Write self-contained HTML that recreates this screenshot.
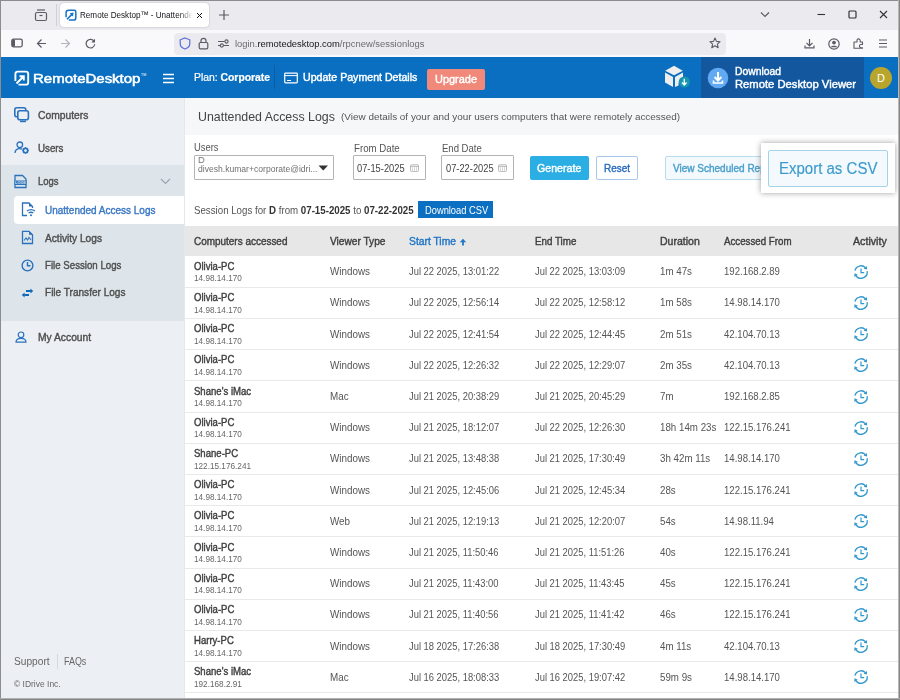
<!DOCTYPE html>
<html><head><meta charset="utf-8"><title>Remote Desktop - Unattended Access Logs</title>
<style>
html,body{margin:0;padding:0}
body{width:900px;height:700px;overflow:hidden;position:relative;background:#fff;font-family:"Liberation Sans",sans-serif}
.a{position:absolute;display:block}
.t{position:absolute;white-space:nowrap;line-height:1}
b{font-weight:bold}
</style></head><body>
<div class="a" style="left:0px;top:0px;width:900px;height:30px;background:#ebebef;"></div>
<div class="a" style="left:0px;top:30px;width:900px;height:27px;background:#f9f9fb;"></div>
<svg class="a" style="left:34px;top:8px;" width="14" height="14" viewBox="0 0 14 14"><rect x="1.5" y="4.5" width="11" height="8" rx="1.5" fill="none" stroke="#5b5b66" stroke-width="1.2"/><line x1="3" y1="2" x2="11" y2="2" stroke="#5b5b66" stroke-width="1.2"/><line x1="5.5" y1="7.5" x2="8.5" y2="7.5" stroke="#5b5b66" stroke-width="1.2"/></svg>
<div class="a" style="left:56px;top:4px;width:1px;height:22px;background:#cfcfd8;"></div>
<div class="a" style="left:60px;top:3px;width:149px;height:24px;background:#fff;border-radius:4px;box-shadow:0 0 2px rgba(0,0,0,.25);"></div>
<svg class="a" style="left:64.5px;top:8.5px;" width="12" height="12" viewBox="0 0 12 12"><path d="M1.1 8.2 V3.6 A2.4 2.4 0 0 1 3.5 1.2 H9.2 A1.6 1.6 0 0 1 10.8 2.8 V8.9 A2.2 2.2 0 0 1 8.6 11.1 H3.8" fill="none" stroke="#1673c9" stroke-width="1.5"/><path d="M2 10.3 L7.2 5.1" stroke="#1673c9" stroke-width="1.6"/><path d="M4.6 4.2 L8.6 3.6 L8 7.6 Z" fill="#1673c9"/></svg>
<div class="a" style="left:80px;top:7px;width:113px;height:16px;overflow:hidden;-webkit-mask-image:linear-gradient(90deg,#000 88%,transparent);mask-image:linear-gradient(90deg,#000 88%,transparent)">
<div class="t" style="left:0.00px;top:3.00px;font-size:9.4px;color:#15141a;transform:scaleX(0.8653);transform-origin:0 0;">Remote Desktop™ - Unattended</div>
</div>
<svg class="a" style="left:195.5px;top:11.5px;" width="7" height="7" viewBox="0 0 7 7"><path d="M1 1 L6 6 M6 1 L1 6" stroke="#15141a" stroke-width="1"/></svg>
<svg class="a" style="left:218px;top:9px;" width="12" height="12" viewBox="0 0 12 12"><path d="M6 1 V11 M1 6 H11" stroke="#5b5b66" stroke-width="1.2"/></svg>
<svg class="a" style="left:760px;top:11px;" width="10" height="8" viewBox="0 0 10 8"><path d="M1 1.5 L5 5.5 L9 1.5" fill="none" stroke="#5b5b66" stroke-width="1.2"/></svg>
<svg class="a" style="left:817px;top:13px;" width="9" height="3" viewBox="0 0 9 3"><line x1="0.5" y1="1.5" x2="8" y2="1.5" stroke="#333" stroke-width="1.1"/></svg>
<svg class="a" style="left:848px;top:10px;" width="9" height="9" viewBox="0 0 9 9"><rect x="1" y="1" width="7" height="7" rx="1" fill="none" stroke="#333" stroke-width="1.2"/></svg>
<svg class="a" style="left:879px;top:10px;" width="9" height="9" viewBox="0 0 9 9"><path d="M1 1 L8 8 M8 1 L1 8" stroke="#333" stroke-width="1.1"/></svg>
<svg class="a" style="left:11px;top:38px;" width="12" height="10" viewBox="0 0 12 10"><rect x="0.8" y="1.2" width="10.4" height="7.6" rx="1.5" fill="none" stroke="#5b5b66" stroke-width="1.3"/><rect x="1" y="1.5" width="3" height="7" fill="#5b5b66"/></svg>
<svg class="a" style="left:36px;top:38px;" width="11" height="11" viewBox="0 0 11 11"><path d="M10 5.5 H1.5 M5.5 1.5 L1.5 5.5 L5.5 9.5" fill="none" stroke="#5b5b66" stroke-width="1.2"/></svg>
<svg class="a" style="left:60px;top:38px;" width="11" height="11" viewBox="0 0 11 11"><path d="M1 5.5 H9.5 M5.5 1.5 L9.5 5.5 L5.5 9.5" fill="none" stroke="#b4b4bb" stroke-width="1.2"/></svg>
<svg class="a" style="left:85px;top:38px;" width="11" height="11" viewBox="0 0 11 11"><path d="M9.2 3.6 A4.3 4.3 0 1 0 9.7 6.2" fill="none" stroke="#5b5b66" stroke-width="1.2"/><path d="M10 0.8 V4.5 H6.3 Z" fill="#5b5b66"/></svg>
<div class="a" style="left:174px;top:32.5px;width:552px;height:22px;background:#ebebef;border-radius:4px;"></div>
<svg class="a" style="left:179px;top:37px;" width="12" height="13" viewBox="0 0 12 13"><path d="M6 1 L10.8 2.8 V6.5 C10.8 9.3 8.6 11.2 6 12 C3.4 11.2 1.2 9.3 1.2 6.5 V2.8 Z" fill="none" stroke="#5b6bdb" stroke-width="1.2"/></svg>
<svg class="a" style="left:198px;top:37px;" width="11" height="13" viewBox="0 0 11 13"><rect x="1.2" y="5.5" width="8.6" height="6.3" rx="1.3" fill="none" stroke="#5b5b66" stroke-width="1.2"/><path d="M3 5.5 V3.8 A2.5 2.5 0 0 1 8 3.8 V5.5" fill="none" stroke="#5b5b66" stroke-width="1.2"/></svg>
<svg class="a" style="left:217px;top:38px;" width="13" height="11" viewBox="0 0 13 11"><path d="M1 3.5 H7.5 M1 7.5 H3.5 M6.5 7.5 H12" stroke="#5b5b66" stroke-width="1.1"/><circle cx="9.5" cy="3.5" r="1.6" fill="none" stroke="#5b5b66" stroke-width="1.1"/><circle cx="4.8" cy="7.5" r="1.6" fill="none" stroke="#5b5b66" stroke-width="1.1"/></svg>
<div class="t" style="left:235.40px;top:40.00px;font-size:9.2px;color:#6a6a72;transform:scaleX(1.0214);transform-origin:0 0;">login.<span style="color:#15141a">remotedesktop.com</span>/rpcnew/sessionlogs</div>
<svg class="a" style="left:709px;top:37px;" width="12" height="12" viewBox="0 0 12 12"><path d="M6 1 L7.5 4.4 L11.1 4.7 L8.4 7.1 L9.2 10.7 L6 8.8 L2.8 10.7 L3.6 7.1 L0.9 4.7 L4.5 4.4 Z" fill="none" stroke="#5b5b66" stroke-width="1.1" stroke-linejoin="round"/></svg>
<svg class="a" style="left:804px;top:38px;" width="11" height="11" viewBox="0 0 11 11"><path d="M5.5 1 V7.5 M2.5 4.8 L5.5 7.8 L8.5 4.8 M1 7.5 V9.8 H10 V7.5" fill="none" stroke="#5b5b66" stroke-width="1.2"/></svg>
<svg class="a" style="left:828px;top:38px;" width="12" height="12" viewBox="0 0 12 12"><circle cx="6" cy="6" r="5.2" fill="none" stroke="#5b5b66" stroke-width="1.2"/><circle cx="6" cy="4.6" r="1.9" fill="#5b5b66"/><path d="M2.8 9.2 C3.5 7.3 8.5 7.3 9.2 9.2" fill="#5b5b66"/></svg>
<svg class="a" style="left:853px;top:38px;" width="12" height="11" viewBox="0 0 12 11"><path d="M1 4 H4 V2.5 A1.6 1.6 0 0 1 7.2 2.5 V4 H9.5 V6.5 H8 A1.6 1.6 0 0 0 8 9.7 H9.5 V10.3 H1 Z" fill="none" stroke="#5b5b66" stroke-width="1.1" stroke-linejoin="round"/></svg>
<svg class="a" style="left:878px;top:38px;" width="10" height="11" viewBox="0 0 10 11"><path d="M1 2 H9 M1 5.5 H9 M1 9 H9" stroke="#5b5b66" stroke-width="1.2"/></svg>
<div class="a" style="left:0px;top:57px;width:900px;height:41px;background:#0a6fc0;"></div>
<div class="a" style="left:701px;top:57px;width:163px;height:41px;background:#13579f;"></div>
<svg class="a" style="left:14px;top:70px;" width="16" height="16" viewBox="0 0 16 16"><path d="M4.5 14.6 H12 A2.2 2.2 0 0 0 14.2 12.4 V3.8 A2.2 2.2 0 0 0 12 1.6 H3.6 A2.2 2.2 0 0 0 1.4 3.8 V11" fill="none" stroke="#fff" stroke-width="1.9"/><path d="M2.5 13.5 L9.5 6.5 M5.5 6.2 H9.8 V10.5" fill="none" stroke="#fff" stroke-width="1.9"/></svg>
<div class="t" style="left:32.50px;top:72.00px;font-size:13.6px;color:#fff;-webkit-text-stroke:0.55px #fff;transform:scaleX(1.1024);transform-origin:0 0;">RemoteDesktop</div>
<div class="t" style="left:141.00px;top:74.00px;font-size:3.5px;color:#fff;">TM</div>
<svg class="a" style="left:162px;top:73px;" width="13" height="11" viewBox="0 0 13 11"><path d="M1 1.5 H12 M1 5.5 H12 M1 9.5 H12" stroke="#fff" stroke-width="1.6"/></svg>
<div class="t" style="left:194.30px;top:72.00px;font-size:10.6px;color:#fff;-webkit-text-stroke:0.2px #fff;transform:scaleX(0.9792);transform-origin:0 0;">Plan: <b>Corporate</b></div>
<div class="a" style="left:274px;top:65px;width:1px;height:24px;background:#0a5ca3;"></div>
<svg class="a" style="left:284px;top:72px;" width="14" height="12" viewBox="0 0 14 12"><rect x="0.7" y="1.2" width="12.6" height="9.6" rx="0.8" fill="none" stroke="#fff" stroke-width="1.2"/><line x1="1" y1="3.6" x2="13" y2="3.6" stroke="#fff" stroke-width="1"/><line x1="3" y1="8.5" x2="7" y2="8.5" stroke="#fff" stroke-width="1"/></svg>
<div class="t" style="left:302.70px;top:73.00px;font-size:10.2px;color:#fff;-webkit-text-stroke:0.4px #fff;transform:scaleX(1.0410);transform-origin:0 0;">Update Payment Details</div>
<div class="a" style="left:427px;top:68.5px;width:58px;height:21px;background:#f08979;border-radius:2px;"></div>
<div class="t" style="left:435.00px;top:74.00px;font-size:10.8px;color:#fff;-webkit-text-stroke:0.4px #fff;transform:scaleX(1.0138);transform-origin:0 0;">Upgrade</div>
<svg class="a" style="left:663px;top:64px;" width="30" height="28" viewBox="0 0 30 28"><path d="M11 1.8 L19.8 6.8 L11 11.2 L2.2 6.8 Z" fill="#eeeeee"/><path d="M2 8.6 L10 12.9 V23 L2 18.6 Z" fill="#eeeeee"/><path d="M12 12.9 L20 8.6 V15 A6 6 0 0 0 15.5 21.5 L12 23 Z" fill="#eeeeee"/><circle cx="21.3" cy="18" r="5.6" fill="#1597b0"/><path d="M21.3 14.8 V20.6 M19 18.5 L21.3 20.9 L23.6 18.5" fill="none" stroke="#fff" stroke-width="1.4"/></svg>
<svg class="a" style="left:707px;top:67px;" width="22" height="22" viewBox="0 0 22 22"><circle cx="11" cy="11" r="10.3" fill="#62a9f3"/><path d="M11 5 V13.2 M7.6 10 L11 13.5 L14.4 10" fill="none" stroke="#fff" stroke-width="2"/><path d="M6.5 13.5 V16 H15.5 V13.5" fill="none" stroke="#fff" stroke-width="1.6"/></svg>
<div class="t" style="left:735.00px;top:66.00px;font-size:10.5px;color:#fff;-webkit-text-stroke:0.4px #fff;transform:scaleX(0.9851);transform-origin:0 0;">Download</div>
<div class="t" style="left:735.00px;top:79.00px;font-size:10.5px;color:#fff;-webkit-text-stroke:0.4px #fff;transform:scaleX(1.0705);transform-origin:0 0;">Remote Desktop Viewer</div>
<div class="a" style="left:870px;top:67px;width:22px;height:22px;border-radius:50%;background:#b9a52c;"></div>
<div class="t" style="left:877.00px;top:73.00px;font-size:11px;color:#fff;">D</div>
<div class="a" style="left:0px;top:98px;width:184px;height:602px;background:#ecf0f4;"></div>
<div class="a" style="left:184px;top:98px;width:1px;height:602px;background:#e2e8ed;"></div>
<div class="a" style="left:0px;top:165px;width:184px;height:156px;background:#dde5ea;"></div>
<div class="a" style="left:14px;top:196px;width:170px;height:27.5px;background:#fff;border-radius:4px 0 0 4px;"></div>
<svg class="a" style="left:14px;top:107px;" width="16" height="16" viewBox="0 0 16 16"><rect x="0.8" y="0.8" width="11" height="9" rx="2" fill="none" stroke="#2a72bd" stroke-width="1.6"/><rect x="3.8" y="3.8" width="10.6" height="9" rx="2" fill="#ecf0f4" stroke="#2a72bd" stroke-width="1.6"/><rect x="6" y="13.6" width="6" height="1.6" fill="#2a72bd"/></svg>
<div class="t" style="left:37.50px;top:110.00px;font-size:10.6px;color:#4e4e4e;-webkit-text-stroke:0.4px #4e4e4e;transform:scaleX(0.9703);transform-origin:0 0;">Computers</div>
<svg class="a" style="left:14px;top:141px;" width="16" height="13" viewBox="0 0 16 13"><circle cx="5.8" cy="3.8" r="2.8" fill="none" stroke="#2a72bd" stroke-width="1.3"/><path d="M0.9 12 C1.2 8.6 3.5 7.6 5.8 7.6 C6.8 7.6 7.6 7.8 8.3 8.2" fill="none" stroke="#2a72bd" stroke-width="1.3"/><circle cx="11.5" cy="9.6" r="2.2" fill="none" stroke="#2a72bd" stroke-width="1.6"/><path d="M11.5 6.3 V7 M11.5 12.2 V12.9 M8.2 9.6 H8.9 M14.1 9.6 H14.8 M9.2 7.3 L9.7 7.8 M13.3 11.4 L13.8 11.9 M13.8 7.3 L13.3 7.8 M9.7 11.4 L9.2 11.9" stroke="#2a72bd" stroke-width="1.5"/></svg>
<div class="t" style="left:37.50px;top:143.00px;font-size:10.6px;color:#4e4e4e;-webkit-text-stroke:0.4px #4e4e4e;transform:scaleX(0.9212);transform-origin:0 0;">Users</div>
<svg class="a" style="left:14px;top:174px;" width="13" height="15" viewBox="0 0 13 15"><path d="M1 1.5 H8.5 L12 5 V13.5 H1 Z" fill="none" stroke="#2a72bd" stroke-width="1.3"/><rect x="0.5" y="6.5" width="12" height="4.5" fill="#2a72bd"/><text x="6.5" y="10.2" font-size="3.8" fill="#dce4ea" text-anchor="middle" font-family="Liberation Sans" font-weight="bold">LOGS</text></svg>
<div class="t" style="left:37.50px;top:176.00px;font-size:10.6px;color:#4e4e4e;-webkit-text-stroke:0.4px #4e4e4e;transform:scaleX(0.8918);transform-origin:0 0;">Logs</div>
<svg class="a" style="left:160px;top:178px;" width="11" height="7" viewBox="0 0 11 7"><path d="M1 1 L5.5 5.5 L10 1" fill="none" stroke="#9aa4ad" stroke-width="1.1"/></svg>
<svg class="a" style="left:21px;top:202px;" width="15" height="15" viewBox="0 0 15 15"><path d="M6 13.5 H1.5 V1 H8 L11.5 4.5 V6" fill="none" stroke="#2a72bd" stroke-width="1.3"/><path d="M8 1 V4.5 H11.5" fill="#2a72bd"/><path d="M6 9 A7 7 0 0 1 14 9 M7.6 11 A4.5 4.5 0 0 1 12.4 11" fill="none" stroke="#2a72bd" stroke-width="1.3"/><circle cx="10" cy="13.2" r="1" fill="#2a72bd"/></svg>
<div class="t" style="left:45.00px;top:205.00px;font-size:10.6px;color:#3a78c6;-webkit-text-stroke:0.4px #3a78c6;transform:scaleX(0.9423);transform-origin:0 0;">Unattended Access Logs</div>
<svg class="a" style="left:21px;top:230px;" width="13" height="15" viewBox="0 0 13 15"><path d="M1.5 1.3 H8 L11.5 4.8 V13.5 H1.5 Z" fill="none" stroke="#2a72bd" stroke-width="1.3"/><path d="M8 1 V4.8 H11.8" fill="#2a72bd"/><path d="M3 10.5 L5 8 L6.5 10 L8 7.5 L10 10" fill="none" stroke="#2a72bd" stroke-width="1.1"/></svg>
<div class="t" style="left:44.80px;top:233.00px;font-size:10.6px;color:#4e4e4e;-webkit-text-stroke:0.4px #4e4e4e;transform:scaleX(0.9580);transform-origin:0 0;">Activity Logs</div>
<svg class="a" style="left:21px;top:259px;" width="13" height="13" viewBox="0 0 13 13"><circle cx="6.5" cy="6.5" r="5.4" fill="none" stroke="#2a72bd" stroke-width="1.4"/><path d="M6.5 3 V6.8 H9.5" fill="none" stroke="#2a72bd" stroke-width="1.4"/></svg>
<div class="t" style="left:44.80px;top:260.00px;font-size:10.6px;color:#4e4e4e;-webkit-text-stroke:0.4px #4e4e4e;transform:scaleX(0.9143);transform-origin:0 0;">File Session Logs</div>
<svg class="a" style="left:21px;top:287px;" width="13" height="12" viewBox="0 0 13 12"><path d="M5 3.9 H9.8 M3.3 8 H8" stroke="#0f69ba" stroke-width="2"/><path d="M9.4 1.4 L12.2 3.9 L9.4 6.4 Z M3.6 5.5 L0.8 8 L3.6 10.5 Z" fill="#0f69ba"/></svg>
<div class="t" style="left:44.80px;top:287.00px;font-size:10.6px;color:#4e4e4e;-webkit-text-stroke:0.4px #4e4e4e;transform:scaleX(0.9489);transform-origin:0 0;">File Transfer Logs</div>
<svg class="a" style="left:15px;top:331px;" width="12" height="12" viewBox="0 0 12 12"><circle cx="6" cy="3.8" r="2.8" fill="none" stroke="#2a72bd" stroke-width="1.2"/><path d="M1 11.2 C1 8.3 3.2 7.3 6 7.3 C8.8 7.3 11 8.3 11 11.2 Z" fill="none" stroke="#2a72bd" stroke-width="1.2"/></svg>
<div class="t" style="left:37.60px;top:332.00px;font-size:10.6px;color:#4e4e4e;-webkit-text-stroke:0.4px #4e4e4e;transform:scaleX(0.9709);transform-origin:0 0;">My Account</div>
<div class="t" style="left:14.00px;top:657.00px;font-size:10px;color:#666;transform:scaleX(1.0164);transform-origin:0 0;">Support</div>
<div class="a" style="left:57px;top:654px;width:1px;height:15px;background:#d4d9de;"></div>
<div class="t" style="left:64.40px;top:657.00px;font-size:10px;color:#666;transform:scaleX(0.8918);transform-origin:0 0;">FAQs</div>
<div class="t" style="left:14.00px;top:680.00px;font-size:8.6px;color:#666;transform:scaleX(0.9845);transform-origin:0 0;">© IDrive Inc.</div>
<div class="a" style="left:185px;top:98px;width:714px;height:36.5px;background:#f5f7f8;"></div>
<div class="t" style="left:198.00px;top:110.00px;font-size:13.4px;color:#444;transform:scaleX(0.9241);transform-origin:0 0;">Unattended Access Logs</div>
<div class="t" style="left:341.00px;top:112.00px;font-size:9.9px;color:#555;transform:scaleX(1.0052);transform-origin:0 0;">(View details of your and your users computers that were remotely accessed)</div>
<div class="t" style="left:194.20px;top:143.00px;font-size:10.2px;color:#555;transform:scaleX(0.9236);transform-origin:0 0;">Users</div>
<div class="a" style="left:194px;top:155px;width:140px;height:24.7px;background:#fff;box-sizing:border-box;border:1px solid #b3b3b3;border-radius:1px;"></div>
<div class="t" style="left:198.00px;top:156.00px;font-size:9.2px;color:#777;">D</div>
<div class="t" style="left:198.00px;top:165.00px;font-size:9.3px;color:#707070;transform:scaleX(0.9219);transform-origin:0 0;">divesh.kumar+corporate@idri...</div>
<svg class="a" style="left:318px;top:165px;" width="11" height="6" viewBox="0 0 11 6"><path d="M0.5 0.5 H10 L5.25 5.5 Z" fill="#333"/></svg>
<div class="t" style="left:353.60px;top:144.00px;font-size:10.2px;color:#555;transform:scaleX(0.9507);transform-origin:0 0;">From Date</div>
<div class="a" style="left:353px;top:155.4px;width:72.6px;height:25px;background:#fff;box-sizing:border-box;border:1px solid #b3b3b3;border-radius:1px;"></div>
<div class="t" style="left:357.40px;top:163.00px;font-size:10.6px;color:#444;transform:scaleX(0.8778);transform-origin:0 0;">07-15-2025</div>
<svg class="a" style="left:410px;top:164px;" width="9" height="8" viewBox="0 0 9 8"><rect x="0.5" y="0.8" width="8" height="6.6" rx="0.8" fill="none" stroke="#a8a8a8" stroke-width="0.8"/><line x1="0.5" y1="2.4" x2="8.5" y2="2.4" stroke="#a8a8a8" stroke-width="0.8"/><path d="M2 4 h1 M4 4 h1 M6 4 h1 M2 5.8 h1 M4 5.8 h1 M6 5.8 h1" stroke="#a8a8a8" stroke-width="0.8"/></svg>
<div class="t" style="left:441.60px;top:144.00px;font-size:10.2px;color:#555;transform:scaleX(0.9358);transform-origin:0 0;">End Date</div>
<div class="a" style="left:441.4px;top:155.4px;width:72.6px;height:25px;background:#fff;box-sizing:border-box;border:1px solid #b3b3b3;border-radius:1px;"></div>
<div class="t" style="left:445.80px;top:163.00px;font-size:10.6px;color:#444;transform:scaleX(0.8778);transform-origin:0 0;">07-22-2025</div>
<svg class="a" style="left:498.4px;top:164px;" width="9" height="8" viewBox="0 0 9 8"><rect x="0.5" y="0.8" width="8" height="6.6" rx="0.8" fill="none" stroke="#a8a8a8" stroke-width="0.8"/><line x1="0.5" y1="2.4" x2="8.5" y2="2.4" stroke="#a8a8a8" stroke-width="0.8"/><path d="M2 4 h1 M4 4 h1 M6 4 h1 M2 5.8 h1 M4 5.8 h1 M6 5.8 h1" stroke="#a8a8a8" stroke-width="0.8"/></svg>
<div class="a" style="left:529.7px;top:155.5px;width:59.3px;height:24.5px;background:#2aaee4;border-radius:2px;"></div>
<div class="t" style="left:537.30px;top:163.00px;font-size:10.8px;color:#fff;-webkit-text-stroke:0.4px #fff;transform:scaleX(0.9860);transform-origin:0 0;">Generate</div>
<div class="a" style="left:596px;top:155.5px;width:42px;height:24.5px;background:#fff;box-sizing:border-box;border:1px solid #aac6ea;border-radius:2px;"></div>
<div class="t" style="left:604.30px;top:163.00px;font-size:10.8px;color:#2c6cbf;-webkit-text-stroke:0.4px #2c6cbf;transform:scaleX(0.9216);transform-origin:0 0;">Reset</div>
<div class="a" style="left:665px;top:155.5px;width:110px;height:24.5px;background:#f3f9fc;box-sizing:border-box;border:1px solid #b7dcee;border-radius:2px;"></div>
<div class="t" style="left:673.00px;top:163.00px;font-size:10.6px;color:#4a9fcc;-webkit-text-stroke:0.4px #4a9fcc;transform:scaleX(0.9449);transform-origin:0 0;">View Scheduled Reports</div>
<div class="a" style="left:760.5px;top:142.5px;width:134.5px;height:50px;background:#fff;box-shadow:0 0 6px rgba(0,0,0,.38);"></div>
<div class="a" style="left:768px;top:150px;width:120px;height:36.5px;background:#f3f9fc;box-sizing:border-box;border:1px solid #a6d2e8;border-radius:2px;"></div>
<div class="t" style="left:778.60px;top:161.00px;font-size:16px;color:#3d9bcc;-webkit-text-stroke:0.15px #3d9bcc;transform:scaleX(0.9377);transform-origin:0 0;">Export as CSV</div>
<div class="t" style="left:194.20px;top:206.00px;font-size:10.4px;color:#555;transform:scaleX(0.9341);transform-origin:0 0;">Session Logs for <b style="color:#333">D</b> from <b style="color:#333">07-15-2025</b> to <b style="color:#333">07-22-2025</b></div>
<div class="a" style="left:417.8px;top:201.3px;width:75.6px;height:17px;background:#0b70c2;"></div>
<div class="t" style="left:424.50px;top:206.00px;font-size:10.4px;color:#fff;transform:scaleX(0.8961);transform-origin:0 0;">Download CSV</div>
<div class="a" style="left:185px;top:226px;width:714px;height:29.8px;background:#e7e7e7;"></div>
<div class="t" style="left:194.30px;top:236.00px;font-size:10.6px;color:#3f3f3f;-webkit-text-stroke:0.4px #3f3f3f;transform:scaleX(0.9390);transform-origin:0 0;">Computers accessed</div>
<div class="t" style="left:330.30px;top:236.00px;font-size:10.6px;color:#3f3f3f;-webkit-text-stroke:0.4px #3f3f3f;transform:scaleX(0.9578);transform-origin:0 0;">Viewer Type</div>
<div class="t" style="left:408.90px;top:236.00px;font-size:10.6px;color:#2276c6;-webkit-text-stroke:0.4px #2276c6;transform:scaleX(0.9730);transform-origin:0 0;">Start Time</div>
<svg class="a" style="left:459px;top:238px;" width="8" height="8" viewBox="0 0 8 8"><path d="M4 7.5 V3" stroke="#2276c6" stroke-width="1.8"/><path d="M4 0.8 L7.2 4.2 H0.8 Z" fill="#2276c6"/></svg>
<div class="t" style="left:534.60px;top:236.00px;font-size:10.6px;color:#3f3f3f;-webkit-text-stroke:0.4px #3f3f3f;transform:scaleX(0.9246);transform-origin:0 0;">End Time</div>
<div class="t" style="left:660.00px;top:236.00px;font-size:10.6px;color:#3f3f3f;-webkit-text-stroke:0.4px #3f3f3f;transform:scaleX(0.9933);transform-origin:0 0;">Duration</div>
<div class="t" style="left:724.40px;top:236.00px;font-size:10.6px;color:#3f3f3f;-webkit-text-stroke:0.4px #3f3f3f;transform:scaleX(0.9181);transform-origin:0 0;">Accessed From</div>
<div class="t" style="left:853.00px;top:236.00px;font-size:10.6px;color:#3f3f3f;-webkit-text-stroke:0.4px #3f3f3f;transform:scaleX(1.0068);transform-origin:0 0;">Activity</div>
<div class="a" style="left:185px;top:286.8px;width:714px;height:1px;background:#e9e9e9;"></div>
<div class="t" style="left:194.10px;top:262.00px;font-size:10.2px;color:#3f3f3f;-webkit-text-stroke:0.4px #3f3f3f;transform:scaleX(0.9379);transform-origin:0 0;">Olivia-PC</div>
<div class="t" style="left:194.10px;top:274.00px;font-size:9.3px;color:#666;transform:scaleX(0.8821);transform-origin:0 0;">14.98.14.170</div>
<div class="t" style="left:330.30px;top:267.00px;font-size:10.2px;color:#555;transform:scaleX(0.9667);transform-origin:0 0;">Windows</div>
<div class="t" style="left:409.00px;top:267.00px;font-size:10.2px;color:#555;transform:scaleX(0.9203);transform-origin:0 0;">Jul 22 2025, 13:01:22</div>
<div class="t" style="left:534.60px;top:267.00px;font-size:10.2px;color:#555;transform:scaleX(0.9203);transform-origin:0 0;">Jul 22 2025, 13:03:09</div>
<div class="t" style="left:660.00px;top:267.00px;font-size:10.2px;color:#555;transform:scaleX(0.9567);transform-origin:0 0;">1m 47s</div>
<div class="t" style="left:724.40px;top:267.00px;font-size:10.2px;color:#555;transform:scaleX(0.9403);transform-origin:0 0;">192.168.2.89</div>
<svg class="a" style="left:853px;top:263.8px;" width="16" height="16" viewBox="0 0 16 16"><path d="M1.94 6.71 A6.2 6.2 0 0 1 12.61 3.85 M14.14 7.14 A6.2 6.2 0 0 1 2.74 11.29" fill="none" stroke="#3298cc" stroke-width="1.3"/><path d="M14.15 5.56 L13.77 2.00 L10.65 4.81 Z M1.52 9.33 L1.28 12.91 L4.84 10.68 Z" fill="#3298cc"/><path d="M8 4.4 V8.7 H11.2" fill="none" stroke="#3298cc" stroke-width="1.2"/></svg>
<div class="a" style="left:185px;top:318.0px;width:714px;height:1px;background:#e9e9e9;"></div>
<div class="t" style="left:194.10px;top:293.00px;font-size:10.2px;color:#3f3f3f;-webkit-text-stroke:0.4px #3f3f3f;transform:scaleX(0.9379);transform-origin:0 0;">Olivia-PC</div>
<div class="t" style="left:194.10px;top:306.00px;font-size:9.3px;color:#666;transform:scaleX(0.8821);transform-origin:0 0;">14.98.14.170</div>
<div class="t" style="left:330.30px;top:298.00px;font-size:10.2px;color:#555;transform:scaleX(0.9667);transform-origin:0 0;">Windows</div>
<div class="t" style="left:409.00px;top:298.00px;font-size:10.2px;color:#555;transform:scaleX(0.9203);transform-origin:0 0;">Jul 22 2025, 12:56:14</div>
<div class="t" style="left:534.60px;top:298.00px;font-size:10.2px;color:#555;transform:scaleX(0.9203);transform-origin:0 0;">Jul 22 2025, 12:58:12</div>
<div class="t" style="left:660.00px;top:298.00px;font-size:10.2px;color:#555;transform:scaleX(0.9567);transform-origin:0 0;">1m 58s</div>
<div class="t" style="left:724.40px;top:298.00px;font-size:10.2px;color:#555;transform:scaleX(0.9403);transform-origin:0 0;">14.98.14.170</div>
<svg class="a" style="left:853px;top:295.0px;" width="16" height="16" viewBox="0 0 16 16"><path d="M1.94 6.71 A6.2 6.2 0 0 1 12.61 3.85 M14.14 7.14 A6.2 6.2 0 0 1 2.74 11.29" fill="none" stroke="#3298cc" stroke-width="1.3"/><path d="M14.15 5.56 L13.77 2.00 L10.65 4.81 Z M1.52 9.33 L1.28 12.91 L4.84 10.68 Z" fill="#3298cc"/><path d="M8 4.4 V8.7 H11.2" fill="none" stroke="#3298cc" stroke-width="1.2"/></svg>
<div class="a" style="left:185px;top:349.2px;width:714px;height:1px;background:#e9e9e9;"></div>
<div class="t" style="left:194.10px;top:324.00px;font-size:10.2px;color:#3f3f3f;-webkit-text-stroke:0.4px #3f3f3f;transform:scaleX(0.9379);transform-origin:0 0;">Olivia-PC</div>
<div class="t" style="left:194.10px;top:337.00px;font-size:9.3px;color:#666;transform:scaleX(0.8821);transform-origin:0 0;">14.98.14.170</div>
<div class="t" style="left:330.30px;top:330.00px;font-size:10.2px;color:#555;transform:scaleX(0.9667);transform-origin:0 0;">Windows</div>
<div class="t" style="left:409.00px;top:330.00px;font-size:10.2px;color:#555;transform:scaleX(0.9203);transform-origin:0 0;">Jul 22 2025, 12:41:54</div>
<div class="t" style="left:534.60px;top:330.00px;font-size:10.2px;color:#555;transform:scaleX(0.9203);transform-origin:0 0;">Jul 22 2025, 12:44:45</div>
<div class="t" style="left:660.00px;top:330.00px;font-size:10.2px;color:#555;transform:scaleX(0.9567);transform-origin:0 0;">2m 51s</div>
<div class="t" style="left:724.40px;top:330.00px;font-size:10.2px;color:#555;transform:scaleX(0.9403);transform-origin:0 0;">42.104.70.13</div>
<svg class="a" style="left:853px;top:326.2px;" width="16" height="16" viewBox="0 0 16 16"><path d="M1.94 6.71 A6.2 6.2 0 0 1 12.61 3.85 M14.14 7.14 A6.2 6.2 0 0 1 2.74 11.29" fill="none" stroke="#3298cc" stroke-width="1.3"/><path d="M14.15 5.56 L13.77 2.00 L10.65 4.81 Z M1.52 9.33 L1.28 12.91 L4.84 10.68 Z" fill="#3298cc"/><path d="M8 4.4 V8.7 H11.2" fill="none" stroke="#3298cc" stroke-width="1.2"/></svg>
<div class="a" style="left:185px;top:380.4px;width:714px;height:1px;background:#e9e9e9;"></div>
<div class="t" style="left:194.10px;top:355.00px;font-size:10.2px;color:#3f3f3f;-webkit-text-stroke:0.4px #3f3f3f;transform:scaleX(0.9379);transform-origin:0 0;">Olivia-PC</div>
<div class="t" style="left:194.10px;top:368.00px;font-size:9.3px;color:#666;transform:scaleX(0.8821);transform-origin:0 0;">14.98.14.170</div>
<div class="t" style="left:330.30px;top:361.00px;font-size:10.2px;color:#555;transform:scaleX(0.9667);transform-origin:0 0;">Windows</div>
<div class="t" style="left:409.00px;top:361.00px;font-size:10.2px;color:#555;transform:scaleX(0.9203);transform-origin:0 0;">Jul 22 2025, 12:26:32</div>
<div class="t" style="left:534.60px;top:361.00px;font-size:10.2px;color:#555;transform:scaleX(0.9203);transform-origin:0 0;">Jul 22 2025, 12:29:07</div>
<div class="t" style="left:660.00px;top:361.00px;font-size:10.2px;color:#555;transform:scaleX(0.9567);transform-origin:0 0;">2m 35s</div>
<div class="t" style="left:724.40px;top:361.00px;font-size:10.2px;color:#555;transform:scaleX(0.9403);transform-origin:0 0;">42.104.70.13</div>
<svg class="a" style="left:853px;top:357.4px;" width="16" height="16" viewBox="0 0 16 16"><path d="M1.94 6.71 A6.2 6.2 0 0 1 12.61 3.85 M14.14 7.14 A6.2 6.2 0 0 1 2.74 11.29" fill="none" stroke="#3298cc" stroke-width="1.3"/><path d="M14.15 5.56 L13.77 2.00 L10.65 4.81 Z M1.52 9.33 L1.28 12.91 L4.84 10.68 Z" fill="#3298cc"/><path d="M8 4.4 V8.7 H11.2" fill="none" stroke="#3298cc" stroke-width="1.2"/></svg>
<div class="a" style="left:185px;top:411.6px;width:714px;height:1px;background:#e9e9e9;"></div>
<div class="t" style="left:194.10px;top:387.00px;font-size:10.2px;color:#3f3f3f;-webkit-text-stroke:0.4px #3f3f3f;transform:scaleX(0.9379);transform-origin:0 0;">Shane&#39;s iMac</div>
<div class="t" style="left:194.10px;top:399.00px;font-size:9.3px;color:#666;transform:scaleX(0.8821);transform-origin:0 0;">14.98.14.170</div>
<div class="t" style="left:330.30px;top:392.00px;font-size:10.2px;color:#555;transform:scaleX(0.9667);transform-origin:0 0;">Mac</div>
<div class="t" style="left:409.00px;top:392.00px;font-size:10.2px;color:#555;transform:scaleX(0.9203);transform-origin:0 0;">Jul 21 2025, 20:38:29</div>
<div class="t" style="left:534.60px;top:392.00px;font-size:10.2px;color:#555;transform:scaleX(0.9203);transform-origin:0 0;">Jul 21 2025, 20:45:29</div>
<div class="t" style="left:660.00px;top:392.00px;font-size:10.2px;color:#555;transform:scaleX(0.9567);transform-origin:0 0;">7m</div>
<div class="t" style="left:724.40px;top:392.00px;font-size:10.2px;color:#555;transform:scaleX(0.9403);transform-origin:0 0;">192.168.2.85</div>
<svg class="a" style="left:853px;top:388.6px;" width="16" height="16" viewBox="0 0 16 16"><path d="M1.94 6.71 A6.2 6.2 0 0 1 12.61 3.85 M14.14 7.14 A6.2 6.2 0 0 1 2.74 11.29" fill="none" stroke="#3298cc" stroke-width="1.3"/><path d="M14.15 5.56 L13.77 2.00 L10.65 4.81 Z M1.52 9.33 L1.28 12.91 L4.84 10.68 Z" fill="#3298cc"/><path d="M8 4.4 V8.7 H11.2" fill="none" stroke="#3298cc" stroke-width="1.2"/></svg>
<div class="a" style="left:185px;top:442.8px;width:714px;height:1px;background:#e9e9e9;"></div>
<div class="t" style="left:194.10px;top:418.00px;font-size:10.2px;color:#3f3f3f;-webkit-text-stroke:0.4px #3f3f3f;transform:scaleX(0.9379);transform-origin:0 0;">Olivia-PC</div>
<div class="t" style="left:194.10px;top:430.00px;font-size:9.3px;color:#666;transform:scaleX(0.8821);transform-origin:0 0;">14.98.14.170</div>
<div class="t" style="left:330.30px;top:423.00px;font-size:10.2px;color:#555;transform:scaleX(0.9667);transform-origin:0 0;">Windows</div>
<div class="t" style="left:409.00px;top:423.00px;font-size:10.2px;color:#555;transform:scaleX(0.9203);transform-origin:0 0;">Jul 21 2025, 18:12:07</div>
<div class="t" style="left:534.60px;top:423.00px;font-size:10.2px;color:#555;transform:scaleX(0.9203);transform-origin:0 0;">Jul 22 2025, 12:26:30</div>
<div class="t" style="left:660.00px;top:423.00px;font-size:10.2px;color:#555;transform:scaleX(0.9567);transform-origin:0 0;">18h 14m 23s</div>
<div class="t" style="left:724.40px;top:423.00px;font-size:10.2px;color:#555;transform:scaleX(0.9403);transform-origin:0 0;">122.15.176.241</div>
<svg class="a" style="left:853px;top:419.8px;" width="16" height="16" viewBox="0 0 16 16"><path d="M1.94 6.71 A6.2 6.2 0 0 1 12.61 3.85 M14.14 7.14 A6.2 6.2 0 0 1 2.74 11.29" fill="none" stroke="#3298cc" stroke-width="1.3"/><path d="M14.15 5.56 L13.77 2.00 L10.65 4.81 Z M1.52 9.33 L1.28 12.91 L4.84 10.68 Z" fill="#3298cc"/><path d="M8 4.4 V8.7 H11.2" fill="none" stroke="#3298cc" stroke-width="1.2"/></svg>
<div class="a" style="left:185px;top:474.0px;width:714px;height:1px;background:#e9e9e9;"></div>
<div class="t" style="left:194.10px;top:449.00px;font-size:10.2px;color:#3f3f3f;-webkit-text-stroke:0.4px #3f3f3f;transform:scaleX(0.9379);transform-origin:0 0;">Shane-PC</div>
<div class="t" style="left:194.10px;top:462.00px;font-size:9.3px;color:#666;transform:scaleX(0.8821);transform-origin:0 0;">122.15.176.241</div>
<div class="t" style="left:330.30px;top:454.00px;font-size:10.2px;color:#555;transform:scaleX(0.9667);transform-origin:0 0;">Windows</div>
<div class="t" style="left:409.00px;top:454.00px;font-size:10.2px;color:#555;transform:scaleX(0.9203);transform-origin:0 0;">Jul 21 2025, 13:48:38</div>
<div class="t" style="left:534.60px;top:454.00px;font-size:10.2px;color:#555;transform:scaleX(0.9203);transform-origin:0 0;">Jul 21 2025, 17:30:49</div>
<div class="t" style="left:660.00px;top:454.00px;font-size:10.2px;color:#555;transform:scaleX(0.9567);transform-origin:0 0;">3h 42m 11s</div>
<div class="t" style="left:724.40px;top:454.00px;font-size:10.2px;color:#555;transform:scaleX(0.9403);transform-origin:0 0;">14.98.14.170</div>
<svg class="a" style="left:853px;top:451.0px;" width="16" height="16" viewBox="0 0 16 16"><path d="M1.94 6.71 A6.2 6.2 0 0 1 12.61 3.85 M14.14 7.14 A6.2 6.2 0 0 1 2.74 11.29" fill="none" stroke="#3298cc" stroke-width="1.3"/><path d="M14.15 5.56 L13.77 2.00 L10.65 4.81 Z M1.52 9.33 L1.28 12.91 L4.84 10.68 Z" fill="#3298cc"/><path d="M8 4.4 V8.7 H11.2" fill="none" stroke="#3298cc" stroke-width="1.2"/></svg>
<div class="a" style="left:185px;top:505.2px;width:714px;height:1px;background:#e9e9e9;"></div>
<div class="t" style="left:194.10px;top:480.00px;font-size:10.2px;color:#3f3f3f;-webkit-text-stroke:0.4px #3f3f3f;transform:scaleX(0.9379);transform-origin:0 0;">Olivia-PC</div>
<div class="t" style="left:194.10px;top:493.00px;font-size:9.3px;color:#666;transform:scaleX(0.8821);transform-origin:0 0;">14.98.14.170</div>
<div class="t" style="left:330.30px;top:486.00px;font-size:10.2px;color:#555;transform:scaleX(0.9667);transform-origin:0 0;">Windows</div>
<div class="t" style="left:409.00px;top:486.00px;font-size:10.2px;color:#555;transform:scaleX(0.9203);transform-origin:0 0;">Jul 21 2025, 12:45:06</div>
<div class="t" style="left:534.60px;top:486.00px;font-size:10.2px;color:#555;transform:scaleX(0.9203);transform-origin:0 0;">Jul 21 2025, 12:45:34</div>
<div class="t" style="left:660.00px;top:486.00px;font-size:10.2px;color:#555;transform:scaleX(0.9567);transform-origin:0 0;">28s</div>
<div class="t" style="left:724.40px;top:486.00px;font-size:10.2px;color:#555;transform:scaleX(0.9403);transform-origin:0 0;">122.15.176.241</div>
<svg class="a" style="left:853px;top:482.2px;" width="16" height="16" viewBox="0 0 16 16"><path d="M1.94 6.71 A6.2 6.2 0 0 1 12.61 3.85 M14.14 7.14 A6.2 6.2 0 0 1 2.74 11.29" fill="none" stroke="#3298cc" stroke-width="1.3"/><path d="M14.15 5.56 L13.77 2.00 L10.65 4.81 Z M1.52 9.33 L1.28 12.91 L4.84 10.68 Z" fill="#3298cc"/><path d="M8 4.4 V8.7 H11.2" fill="none" stroke="#3298cc" stroke-width="1.2"/></svg>
<div class="a" style="left:185px;top:536.4px;width:714px;height:1px;background:#e9e9e9;"></div>
<div class="t" style="left:194.10px;top:511.00px;font-size:10.2px;color:#3f3f3f;-webkit-text-stroke:0.4px #3f3f3f;transform:scaleX(0.9379);transform-origin:0 0;">Olivia-PC</div>
<div class="t" style="left:194.10px;top:524.00px;font-size:9.3px;color:#666;transform:scaleX(0.8821);transform-origin:0 0;">14.98.14.170</div>
<div class="t" style="left:330.30px;top:517.00px;font-size:10.2px;color:#555;transform:scaleX(0.9667);transform-origin:0 0;">Web</div>
<div class="t" style="left:409.00px;top:517.00px;font-size:10.2px;color:#555;transform:scaleX(0.9203);transform-origin:0 0;">Jul 21 2025, 12:19:13</div>
<div class="t" style="left:534.60px;top:517.00px;font-size:10.2px;color:#555;transform:scaleX(0.9203);transform-origin:0 0;">Jul 21 2025, 12:20:07</div>
<div class="t" style="left:660.00px;top:517.00px;font-size:10.2px;color:#555;transform:scaleX(0.9567);transform-origin:0 0;">54s</div>
<div class="t" style="left:724.40px;top:517.00px;font-size:10.2px;color:#555;transform:scaleX(0.9403);transform-origin:0 0;">14.98.11.94</div>
<svg class="a" style="left:853px;top:513.4px;" width="16" height="16" viewBox="0 0 16 16"><path d="M1.94 6.71 A6.2 6.2 0 0 1 12.61 3.85 M14.14 7.14 A6.2 6.2 0 0 1 2.74 11.29" fill="none" stroke="#3298cc" stroke-width="1.3"/><path d="M14.15 5.56 L13.77 2.00 L10.65 4.81 Z M1.52 9.33 L1.28 12.91 L4.84 10.68 Z" fill="#3298cc"/><path d="M8 4.4 V8.7 H11.2" fill="none" stroke="#3298cc" stroke-width="1.2"/></svg>
<div class="a" style="left:185px;top:567.6px;width:714px;height:1px;background:#e9e9e9;"></div>
<div class="t" style="left:194.10px;top:543.00px;font-size:10.2px;color:#3f3f3f;-webkit-text-stroke:0.4px #3f3f3f;transform:scaleX(0.9379);transform-origin:0 0;">Olivia-PC</div>
<div class="t" style="left:194.10px;top:555.00px;font-size:9.3px;color:#666;transform:scaleX(0.8821);transform-origin:0 0;">14.98.14.170</div>
<div class="t" style="left:330.30px;top:548.00px;font-size:10.2px;color:#555;transform:scaleX(0.9667);transform-origin:0 0;">Windows</div>
<div class="t" style="left:409.00px;top:548.00px;font-size:10.2px;color:#555;transform:scaleX(0.9203);transform-origin:0 0;">Jul 21 2025, 11:50:46</div>
<div class="t" style="left:534.60px;top:548.00px;font-size:10.2px;color:#555;transform:scaleX(0.9203);transform-origin:0 0;">Jul 21 2025, 11:51:26</div>
<div class="t" style="left:660.00px;top:548.00px;font-size:10.2px;color:#555;transform:scaleX(0.9567);transform-origin:0 0;">40s</div>
<div class="t" style="left:724.40px;top:548.00px;font-size:10.2px;color:#555;transform:scaleX(0.9403);transform-origin:0 0;">122.15.176.241</div>
<svg class="a" style="left:853px;top:544.6px;" width="16" height="16" viewBox="0 0 16 16"><path d="M1.94 6.71 A6.2 6.2 0 0 1 12.61 3.85 M14.14 7.14 A6.2 6.2 0 0 1 2.74 11.29" fill="none" stroke="#3298cc" stroke-width="1.3"/><path d="M14.15 5.56 L13.77 2.00 L10.65 4.81 Z M1.52 9.33 L1.28 12.91 L4.84 10.68 Z" fill="#3298cc"/><path d="M8 4.4 V8.7 H11.2" fill="none" stroke="#3298cc" stroke-width="1.2"/></svg>
<div class="a" style="left:185px;top:598.8px;width:714px;height:1px;background:#e9e9e9;"></div>
<div class="t" style="left:194.10px;top:574.00px;font-size:10.2px;color:#3f3f3f;-webkit-text-stroke:0.4px #3f3f3f;transform:scaleX(0.9379);transform-origin:0 0;">Olivia-PC</div>
<div class="t" style="left:194.10px;top:586.00px;font-size:9.3px;color:#666;transform:scaleX(0.8821);transform-origin:0 0;">14.98.14.170</div>
<div class="t" style="left:330.30px;top:579.00px;font-size:10.2px;color:#555;transform:scaleX(0.9667);transform-origin:0 0;">Windows</div>
<div class="t" style="left:409.00px;top:579.00px;font-size:10.2px;color:#555;transform:scaleX(0.9203);transform-origin:0 0;">Jul 21 2025, 11:43:00</div>
<div class="t" style="left:534.60px;top:579.00px;font-size:10.2px;color:#555;transform:scaleX(0.9203);transform-origin:0 0;">Jul 21 2025, 11:43:45</div>
<div class="t" style="left:660.00px;top:579.00px;font-size:10.2px;color:#555;transform:scaleX(0.9567);transform-origin:0 0;">45s</div>
<div class="t" style="left:724.40px;top:579.00px;font-size:10.2px;color:#555;transform:scaleX(0.9403);transform-origin:0 0;">122.15.176.241</div>
<svg class="a" style="left:853px;top:575.8px;" width="16" height="16" viewBox="0 0 16 16"><path d="M1.94 6.71 A6.2 6.2 0 0 1 12.61 3.85 M14.14 7.14 A6.2 6.2 0 0 1 2.74 11.29" fill="none" stroke="#3298cc" stroke-width="1.3"/><path d="M14.15 5.56 L13.77 2.00 L10.65 4.81 Z M1.52 9.33 L1.28 12.91 L4.84 10.68 Z" fill="#3298cc"/><path d="M8 4.4 V8.7 H11.2" fill="none" stroke="#3298cc" stroke-width="1.2"/></svg>
<div class="a" style="left:185px;top:630.0px;width:714px;height:1px;background:#e9e9e9;"></div>
<div class="t" style="left:194.10px;top:605.00px;font-size:10.2px;color:#3f3f3f;-webkit-text-stroke:0.4px #3f3f3f;transform:scaleX(0.9379);transform-origin:0 0;">Olivia-PC</div>
<div class="t" style="left:194.10px;top:618.00px;font-size:9.3px;color:#666;transform:scaleX(0.8821);transform-origin:0 0;">14.98.14.170</div>
<div class="t" style="left:330.30px;top:610.00px;font-size:10.2px;color:#555;transform:scaleX(0.9667);transform-origin:0 0;">Windows</div>
<div class="t" style="left:409.00px;top:610.00px;font-size:10.2px;color:#555;transform:scaleX(0.9203);transform-origin:0 0;">Jul 21 2025, 11:40:56</div>
<div class="t" style="left:534.60px;top:610.00px;font-size:10.2px;color:#555;transform:scaleX(0.9203);transform-origin:0 0;">Jul 21 2025, 11:41:42</div>
<div class="t" style="left:660.00px;top:610.00px;font-size:10.2px;color:#555;transform:scaleX(0.9567);transform-origin:0 0;">46s</div>
<div class="t" style="left:724.40px;top:610.00px;font-size:10.2px;color:#555;transform:scaleX(0.9403);transform-origin:0 0;">122.15.176.241</div>
<svg class="a" style="left:853px;top:607.0px;" width="16" height="16" viewBox="0 0 16 16"><path d="M1.94 6.71 A6.2 6.2 0 0 1 12.61 3.85 M14.14 7.14 A6.2 6.2 0 0 1 2.74 11.29" fill="none" stroke="#3298cc" stroke-width="1.3"/><path d="M14.15 5.56 L13.77 2.00 L10.65 4.81 Z M1.52 9.33 L1.28 12.91 L4.84 10.68 Z" fill="#3298cc"/><path d="M8 4.4 V8.7 H11.2" fill="none" stroke="#3298cc" stroke-width="1.2"/></svg>
<div class="a" style="left:185px;top:661.2px;width:714px;height:1px;background:#e9e9e9;"></div>
<div class="t" style="left:194.10px;top:636.00px;font-size:10.2px;color:#3f3f3f;-webkit-text-stroke:0.4px #3f3f3f;transform:scaleX(0.9379);transform-origin:0 0;">Harry-PC</div>
<div class="t" style="left:194.10px;top:649.00px;font-size:9.3px;color:#666;transform:scaleX(0.8821);transform-origin:0 0;">14.98.14.170</div>
<div class="t" style="left:330.30px;top:642.00px;font-size:10.2px;color:#555;transform:scaleX(0.9667);transform-origin:0 0;">Windows</div>
<div class="t" style="left:409.00px;top:642.00px;font-size:10.2px;color:#555;transform:scaleX(0.9203);transform-origin:0 0;">Jul 18 2025, 17:26:38</div>
<div class="t" style="left:534.60px;top:642.00px;font-size:10.2px;color:#555;transform:scaleX(0.9203);transform-origin:0 0;">Jul 18 2025, 17:30:49</div>
<div class="t" style="left:660.00px;top:642.00px;font-size:10.2px;color:#555;transform:scaleX(0.9567);transform-origin:0 0;">4m 11s</div>
<div class="t" style="left:724.40px;top:642.00px;font-size:10.2px;color:#555;transform:scaleX(0.9403);transform-origin:0 0;">42.104.70.13</div>
<svg class="a" style="left:853px;top:638.2px;" width="16" height="16" viewBox="0 0 16 16"><path d="M1.94 6.71 A6.2 6.2 0 0 1 12.61 3.85 M14.14 7.14 A6.2 6.2 0 0 1 2.74 11.29" fill="none" stroke="#3298cc" stroke-width="1.3"/><path d="M14.15 5.56 L13.77 2.00 L10.65 4.81 Z M1.52 9.33 L1.28 12.91 L4.84 10.68 Z" fill="#3298cc"/><path d="M8 4.4 V8.7 H11.2" fill="none" stroke="#3298cc" stroke-width="1.2"/></svg>
<div class="a" style="left:185px;top:692.4px;width:714px;height:1px;background:#e9e9e9;"></div>
<div class="t" style="left:194.10px;top:667.00px;font-size:10.2px;color:#3f3f3f;-webkit-text-stroke:0.4px #3f3f3f;transform:scaleX(0.9379);transform-origin:0 0;">Shane&#39;s iMac</div>
<div class="t" style="left:194.10px;top:680.00px;font-size:9.3px;color:#666;transform:scaleX(0.8821);transform-origin:0 0;">192.168.2.91</div>
<div class="t" style="left:330.30px;top:673.00px;font-size:10.2px;color:#555;transform:scaleX(0.9667);transform-origin:0 0;">Mac</div>
<div class="t" style="left:409.00px;top:673.00px;font-size:10.2px;color:#555;transform:scaleX(0.9203);transform-origin:0 0;">Jul 16 2025, 18:08:33</div>
<div class="t" style="left:534.60px;top:673.00px;font-size:10.2px;color:#555;transform:scaleX(0.9203);transform-origin:0 0;">Jul 16 2025, 19:07:42</div>
<div class="t" style="left:660.00px;top:673.00px;font-size:10.2px;color:#555;transform:scaleX(0.9567);transform-origin:0 0;">59m 9s</div>
<div class="t" style="left:724.40px;top:673.00px;font-size:10.2px;color:#555;transform:scaleX(0.9403);transform-origin:0 0;">14.98.14.170</div>
<svg class="a" style="left:853px;top:669.4px;" width="16" height="16" viewBox="0 0 16 16"><path d="M1.94 6.71 A6.2 6.2 0 0 1 12.61 3.85 M14.14 7.14 A6.2 6.2 0 0 1 2.74 11.29" fill="none" stroke="#3298cc" stroke-width="1.3"/><path d="M14.15 5.56 L13.77 2.00 L10.65 4.81 Z M1.52 9.33 L1.28 12.91 L4.84 10.68 Z" fill="#3298cc"/><path d="M8 4.4 V8.7 H11.2" fill="none" stroke="#3298cc" stroke-width="1.2"/></svg>
<div class="a" style="left:0px;top:0px;width:900px;height:1px;background:#8c8c8c;"></div>
<div class="a" style="left:0px;top:0px;width:1px;height:700px;background:#8c8c8c;"></div>
<div class="a" style="left:898px;top:0px;width:1px;height:700px;background:#b8b8b8;"></div>
<div class="a" style="left:899px;top:0px;width:1px;height:700px;background:#858585;"></div>
<div class="a" style="left:0px;top:698px;width:900px;height:1px;background:#b0b0b0;"></div>
<div class="a" style="left:0px;top:699px;width:900px;height:1px;background:#858585;"></div>
</body></html>
